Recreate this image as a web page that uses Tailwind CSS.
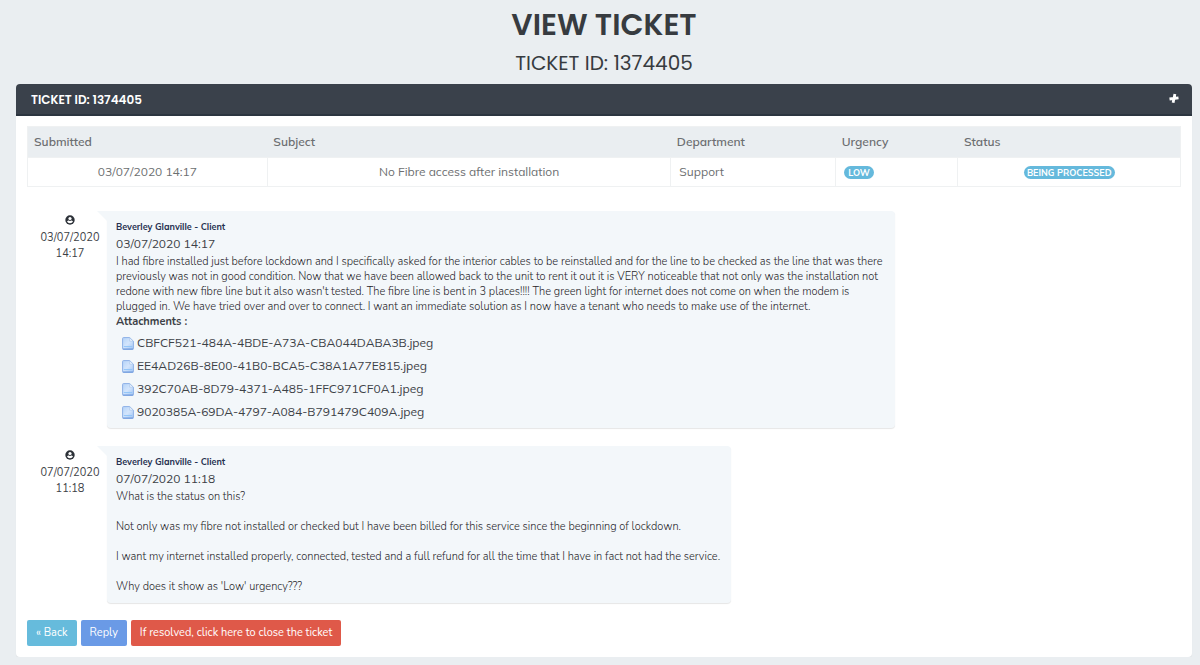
<!DOCTYPE html>
<html lang="en">
<head>
  <meta charset="UTF-8" />
  <meta name="viewport" content="width=device-width, initial-scale=1.0" />
  <title>View Ticket</title>
  <script src="https://cdn.jsdelivr.net/npm/@tailwindcss/browser@4"></script>
</head>
<body class="bg-[#eaeef1] font-['Nunito','Open_Sans',sans-serif] text-[11px] leading-[15px] text-[#3c4146]">
  <!-- Icons -->
  <svg class="absolute size-0" aria-hidden="true">
    <defs>
      <linearGradient id="page" x1="0" y1="0" x2="1" y2="1">
        <stop offset="0" stop-color="#b4d3f8" />
        <stop offset="0.5" stop-color="#d3e5fc" />
        <stop offset="1" stop-color="#a3c5f3" />
      </linearGradient>
    </defs>
    <symbol id="file" viewBox="0 0 12 13">
      <path d="M1.5.6h6.2l3.7 3.6v7.3a.9.9 0 0 1-.9.9h-9a.9.9 0 0 1-.9-.9v-10a.9.9 0 0 1 .9-.9z" fill="url(#page)" stroke="#8db0e6" />
      <path d="M7.7.8v3.4h3.5z" fill="#f1f7fe" stroke="#9dbdea" stroke-width=".6" />
      <path d="M1.8 9.6h8.4" stroke="#8fc4f8" />
      <path d="M.8 12h10.4" stroke="#6d98dc" />
    </symbol>
    <symbol id="user" viewBox="0 0 10 10">
      <circle cx="5" cy="5" r="4.7" fill="#2c3138" />
      <circle cx="5" cy="3.5" r="1.6" fill="#fff" />
      <path d="M2 6.3c.6-.7 1.2-.8 1.7-.8.8.5 1.8.5 2.6 0 .5 0 1.1.1 1.7.8-.4 1.3-1.6 2-3 2s-2.6-.7-3-2z" fill="#fff" />
    </symbol>
  </svg>

  <header class="pt-1 pl-2 text-center font-['Poppins','Inter',sans-serif] text-[#373b40]">
    <h1 class="text-[30px] leading-[42px] font-semibold">VIEW TICKET</h1>
    <h2 class="text-[20px] leading-[34px]">TICKET ID: 1374405</h2>
  </header>

  <main class="mt-1 mr-2 ml-4 rounded-sm bg-white shadow-[0_1px_1px_rgba(0,0,0,0.06)]">
    <div class="flex h-8 items-center justify-between rounded-t-sm border-b-2 border-[#2c3540] bg-[#3a414b] pr-3 pl-[15px] text-white">
      <h3 class="font-['Poppins','Inter',sans-serif] text-[12px] font-semibold">TICKET ID: 1374405</h3>
      <button type="button" aria-label="Expand">
        <svg class="size-3" viewBox="0 0 12 12" fill="none" stroke="currentColor" stroke-width="2.8">
          <path d="M6.9 1 5.1 9.8M1.5 6l9-1.2" />
        </svg>
      </button>
    </div>

    <div class="px-[11px] pt-2.5 pb-[11px]">
      <!-- Ticket summary -->
      <table class="w-full table-fixed border-collapse border border-[#eff1f2] font-['Mulish','Open_Sans',sans-serif] text-[12px] leading-5 text-[#6d6f71]">
        <colgroup>
          <col class="w-[20.8%]" />
          <col class="w-[35%]" />
          <col class="w-[14.3%]" />
          <col class="w-[10.6%]" />
          <col />
        </colgroup>
        <thead>
          <tr class="bg-[#eaeef1] text-left">
            <th class="px-1.5 py-[5px] font-semibold">Submitted</th>
            <th class="px-1.5 py-[5px] font-semibold">Subject</th>
            <th class="px-1.5 py-[5px] font-semibold">Department</th>
            <th class="px-1.5 py-[5px] font-semibold">Urgency</th>
            <th class="px-1.5 py-[5px] font-semibold">Status</th>
          </tr>
        </thead>
        <tbody>
          <tr>
            <td class="border border-[#eff1f2] px-2 py-1 text-center">03/07/2020 14:17</td>
            <td class="border border-[#eff1f2] px-2 py-1 text-center">No Fibre access after installation</td>
            <td class="border border-[#eff1f2] px-2 py-1">Support</td>
            <td class="border border-[#eff1f2] px-2 py-1"><span class="block w-fit rounded-full bg-[#65b9dc] px-1 text-[9px] leading-[13px] font-bold text-white">LOW</span></td>
            <td class="border border-[#eff1f2] px-2 py-1"><span class="mx-auto block w-fit rounded-full bg-[#65b9dc] px-[3px] text-[9px] leading-[13px] font-bold text-white">BEING PROCESSED</span></td>
          </tr>
        </tbody>
      </table>

      <!-- Messages -->
      <article class="mt-6 flex">
        <div class="flex w-[86px] shrink-0 flex-col items-center pt-1 text-center leading-4">
          <svg class="mb-[5px] size-[10px]"><use href="#user" /></svg>
          <p>03/07/2020<br />14:17</p>
        </div>
        <div class="relative -ml-1.5 w-[788px] rounded-sm rounded-tl-none bg-[#f3f7fa] px-[9px] pt-2 pb-[5px] shadow-[0_1px_1px_rgba(0,0,0,0.1)]">
          <span class="absolute top-0 -left-2.5 size-2.5 bg-[#f3f7fa] [clip-path:polygon(0_0,100%_0,100%_100%)]"></span>
          <h4 class="font-['Mulish','Open_Sans',sans-serif] text-[9px] font-bold text-[#26304f]">Beverley Glanville - Client</h4>
          <p class="font-['Mulish','Open_Sans',sans-serif] text-[12px] leading-5">03/07/2020 14:17</p>
          <p class="font-light text-[#1f2429] min-[1100px]:whitespace-nowrap">
            I had fibre installed just before lockdown and I specifically asked for the interior cables to be reinstalled and for the line to be checked as the line that was there<br />
            previously was not in good condition. Now that we have been allowed back to the unit to rent it out it is VERY noticeable that not only was the installation not<br />
            redone with new fibre line but it also wasn't tested. The fibre line is bent in 3 places!!!! The green light for internet does not come on when the modem is<br />
            plugged in. We have tried over and over to connect. I want an immediate solution as I now have a tenant who needs to make use of the internet.
          </p>
          <p class="font-bold">Attachments :</p>
          <ul class="mt-0.5 pl-1.5 font-['Mulish','Open_Sans',sans-serif] text-[12px] leading-[23px]">
            <li><a href="#" class="flex items-center gap-[3px]"><svg class="mt-0.5 h-[13px] w-3"><use href="#file" /></svg>CBFCF521-484A-4BDE-A73A-CBA044DABA3B.jpeg</a></li>
            <li><a href="#" class="flex items-center gap-[3px]"><svg class="mt-0.5 h-[13px] w-3"><use href="#file" /></svg>EE4AD26B-8E00-41B0-BCA5-C38A1A77E815.jpeg</a></li>
            <li><a href="#" class="flex items-center gap-[3px]"><svg class="mt-0.5 h-[13px] w-3"><use href="#file" /></svg>392C70AB-8D79-4371-A485-1FFC971CF0A1.jpeg</a></li>
            <li><a href="#" class="flex items-center gap-[3px]"><svg class="mt-0.5 h-[13px] w-3"><use href="#file" /></svg>9020385A-69DA-4797-A084-B791479C409A.jpeg</a></li>
          </ul>
        </div>
      </article>

      <article class="mt-[18px] flex">
        <div class="flex w-[86px] shrink-0 flex-col items-center pt-1 text-center leading-4">
          <svg class="mb-[5px] size-[10px]"><use href="#user" /></svg>
          <p>07/07/2020<br />11:18</p>
        </div>
        <div class="relative -ml-1.5 w-[624px] rounded-sm rounded-tl-none bg-[#f3f7fa] px-[9px] pt-2 pb-[9px] shadow-[0_1px_1px_rgba(0,0,0,0.1)]">
          <span class="absolute top-0 -left-2.5 size-2.5 bg-[#f3f7fa] [clip-path:polygon(0_0,100%_0,100%_100%)]"></span>
          <h4 class="font-['Mulish','Open_Sans',sans-serif] text-[9px] font-bold text-[#26304f]">Beverley Glanville - Client</h4>
          <p class="font-['Mulish','Open_Sans',sans-serif] text-[12px] leading-5">07/07/2020 11:18</p>
          <div class="space-y-[15px] font-light text-[#1f2429] min-[1100px]:whitespace-nowrap">
            <p>What is the status on this?</p>
            <p>Not only was my fibre not installed or checked but I have been billed for this service since the beginning of lockdown.</p>
            <p>I want my internet installed properly, connected, tested and a full refund for all the time that I have in fact not had the service.</p>
            <p>Why does it show as 'Low' urgency???</p>
          </div>
        </div>
      </article>

      <!-- Actions -->
      <div class="mt-[17px] flex gap-1 leading-4 text-white">
        <a href="#" class="rounded-xs bg-[#66bbdc] px-[9px] py-[5px]">« Back</a>
        <button type="button" class="rounded-xs bg-[#6a9ae6] px-[9px] py-[5px]">Reply</button>
        <button type="button" class="rounded-xs bg-[#df5949] px-[9px] py-[5px]">If resolved, click here to close the ticket</button>
      </div>
    </div>
  </main>
</body>
</html>
